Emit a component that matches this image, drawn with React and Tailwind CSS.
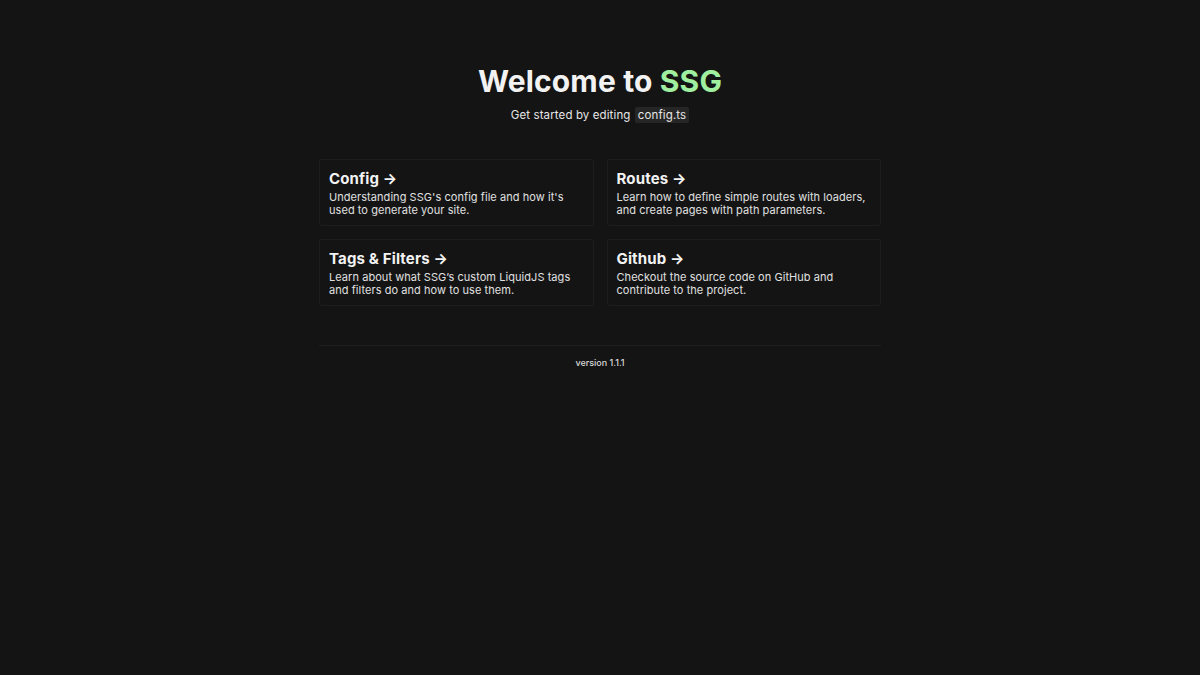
const cards = [
  {
    title: "Config",
    body: "Understanding SSG's config file and how it's used to generate your site.",
  },
  {
    title: "Routes",
    body: "Learn how to define simple routes with loaders, and create pages with path parameters.",
  },
  {
    title: "Tags & Filters",
    body: "Learn about what SSG’s custom LiquidJS tags and filters do and how to use them.",
  },
  {
    title: "Github",
    body: "Checkout the source code on GitHub and contribute to the project.",
  },
];

export default function App() {
  return (
    <div
      className="min-h-screen bg-[#141414] text-[#f2f2f2]"
      style={{ fontFamily: "Inter, 'Noto Sans', sans-serif" }}
    >
      <div className="mx-auto w-[562px] pt-[63px]">
        <header className="text-center">
          <h1 className="text-[30px] font-bold leading-[36px] tracking-[0.005em]">
            Welcome to <span className="text-[#a0ee9f]">SSG</span>
          </h1>
          <p className="mt-[8px] text-[11.5px] leading-[16px] text-[#e6e6e6] tracking-[0.01em]">
            Get started by editing{" "}
            <code className="ml-[1px] inline-block rounded-[2px] bg-[#262626] px-[3px] leading-[16px] font-[inherit]">
              config.ts
            </code>
          </p>
        </header>

        <div className="mt-[36px] grid grid-cols-2 gap-x-[13px] gap-y-[13px]">
          {cards.map((c) => (
            <a
              key={c.title}
              href="#"
              className="block h-[67px] rounded-[3px] border border-[#1e1e1e] pl-[9px] pr-[4px] pt-[9px]"
            >
              <h2 className="text-[15px] font-bold leading-[20px] tracking-[0.01em]">{c.title} →</h2>
              <p className="mt-[2px] text-[11px] leading-[13px] tracking-[0.005em] text-[#e0e0e0]">{c.body}</p>
            </a>
          ))}
        </div>

        <footer className="mt-[39px] border-t border-[#1f1f1f] pt-[11px] text-center">
          <span className="block text-[9px] leading-[12px] font-medium text-[#d9d9d9]">version 1.1.1</span>
        </footer>
      </div>
    </div>
  );
}
